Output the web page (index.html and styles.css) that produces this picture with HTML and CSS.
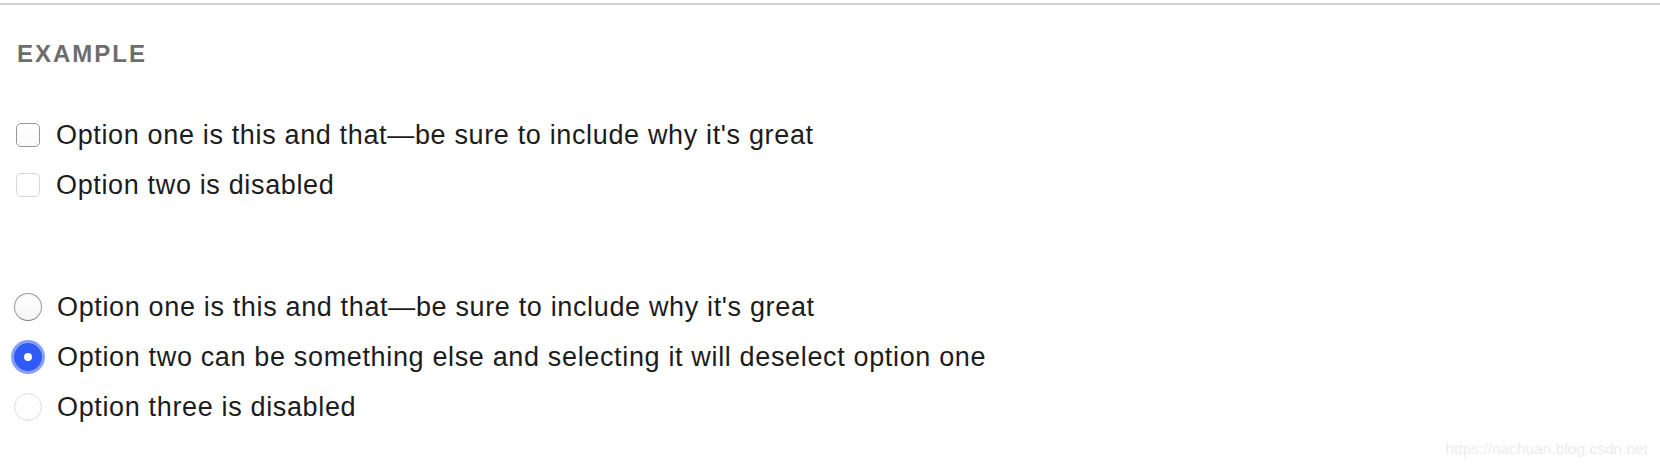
FILE: index.html
```html
<!DOCTYPE html>
<html lang="en">
<head>
    <meta charset="UTF-8">
    <title>Checks and radios</title>
    <link rel="stylesheet" href="styles.css">
</head>
<body>
<div class="example">
    <div class="example-label">Example</div>

    <div class="group">
        <label class="option">
            <input type="checkbox" class="check">
            <span>Option one is this and that&mdash;be sure to include why it's great</span>
        </label>
        <label class="option">
            <input type="checkbox" class="check" disabled>
            <span>Option two is disabled</span>
        </label>
    </div>

    <div class="group radios">
        <label class="option">
            <input type="radio" name="opts" class="radio">
            <span>Option one is this and that&mdash;be sure to include why it's great</span>
        </label>
        <label class="option">
            <input type="radio" name="opts" class="radio" checked>
            <span>Option two can be something else and selecting it will deselect option one</span>
        </label>
        <label class="option">
            <input type="radio" name="opts" class="radio" disabled>
            <span>Option three is disabled</span>
        </label>
    </div>
</div>
<div class="watermark">https://nachuan.blog.csdn.net</div>
</body>
</html>
```

FILE: styles.css
```css
/* Page */
body {
    margin: 0;
    background: #fff;
    font-family: "Liberation Sans", Arial, sans-serif;
    color: #1c1c1c;
    height: 470px;
    overflow: hidden;
    position: relative;
}

/* Example box */
.example {
    margin-top: 3px;
    border-top: 2px solid #d2d2d2;
    padding: 0 17px;
}

.example-label {
    margin-top: 34px;
    font-size: 24px;
    line-height: 30px;
    font-weight: 700;
    letter-spacing: 2px;
    text-transform: uppercase;
    color: #6d6d6d;
}

/* Option groups */
.group {
    margin-top: 41px;
}

.group.radios {
    margin-top: 72px;
}

.option {
    display: flex;
    align-items: center;
    gap: 16px;
    height: 50px;
    font-size: 27px;
    letter-spacing: 0.65px;
}

/* Checkbox */
.check {
    appearance: none;
    -webkit-appearance: none;
    margin: 0 0 0 -1px;
    width: 24px;
    height: 24px;
    border: 1px solid #979797;
    border-radius: 5px;
    background: linear-gradient(#fff, #fafafa);
    flex: none;
}

.check:disabled {
    border-color: #d8d8d8;
    background: #fff;
}

/* Radio */
.radio {
    appearance: none;
    -webkit-appearance: none;
    margin: 0 -1px 0 -3px;
    width: 28px;
    height: 28px;
    border: 1px solid #9a9a9a;
    border-bottom-color: #808080;
    border-radius: 50%;
    background: linear-gradient(#fff, #f6f6f6);
    flex: none;
    position: relative;
}

.radio:disabled {
    border-color: #dcdcdc;
    background: #fff;
}

.radio:checked {
    border-color: #2d57f2;
    background: #2f5af6;
    box-shadow: 0 0 0 3px #86a0f8;
}

.radio:checked::after {
    content: "";
    position: absolute;
    left: 50%;
    top: 50%;
    width: 8px;
    height: 8px;
    margin: -4px 0 0 -4px;
    border-radius: 50%;
    background: #fff;
}

/* Watermark */
.watermark {
    position: absolute;
    right: 12px;
    bottom: 12px;
    font-size: 15.5px;
    color: #ececec;
}
```
